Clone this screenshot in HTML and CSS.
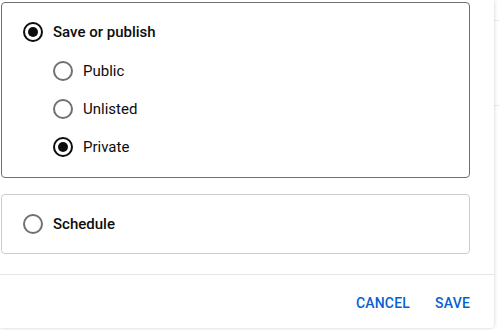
FILE: index.html
```html
<!DOCTYPE html>
<html lang="en">
<head>
    <meta charset="UTF-8">
    <meta name="viewport" content="width=device-width, initial-scale=1.0">
    <title>Visibility</title>
    <link rel="stylesheet" href="styles.css">
</head>
<body>
    <div class="backdrop">
        <div class="dialog">
            <div class="content">
                <div class="option-card selected">
                    <label class="radio-row main">
                        <span class="radio checked"></span>
                        <span>Save or publish</span>
                    </label>
                    <div class="sub-options">
                        <label class="radio-row">
                            <span class="radio"></span>
                            <span>Public</span>
                        </label>
                        <label class="radio-row">
                            <span class="radio"></span>
                            <span>Unlisted</span>
                        </label>
                        <label class="radio-row">
                            <span class="radio checked"></span>
                            <span>Private</span>
                        </label>
                    </div>
                </div>
                <div class="option-card">
                    <label class="radio-row main">
                        <span class="radio"></span>
                        <span>Schedule</span>
                    </label>
                </div>
            </div>
            <div class="footer">
                <button class="text-btn">Cancel</button>
                <button class="text-btn">Save</button>
            </div>
        </div>
    </div>
</body>
</html>
```

FILE: styles.css
```css
body {
    margin: 0;
    background: #ffffff;
    font-family: Roboto, "Liberation Sans", Arial, sans-serif;
    color: #0d0d0d;
    overflow: hidden;
}
.backdrop {
    width: 500px;
    height: 330px;
    background:
        linear-gradient(#eeeeee, #eeeeee) 494px 20px / 6px 1px no-repeat,
        linear-gradient(#eeeeee, #eeeeee) 494px 105px / 6px 1px no-repeat,
        #ffffff;
}
.dialog {
    width: 494px;
    height: 328px;
    background: #ffffff;
    border-radius: 0 0 4px 0;
    box-shadow: 0 0 4px rgba(0, 0, 0, 0.18);
    display: flex;
    flex-direction: column;
}
.content {
    padding: 2px 24px 0 1px;
    display: flex;
    flex-direction: column;
    gap: 16px;
    border-bottom: 1px solid #e5e5e5;
    padding-bottom: 20px;
}
.option-card {
    border: 1px solid #cccccc;
    border-radius: 4px;
    padding: 19px 20px 19px 21px;
}
.option-card.selected {
    border-color: #6f6f6f;
    padding-bottom: 20px;
}
.radio-row {
    display: flex;
    align-items: center;
    gap: 10px;
    height: 20px;
    font-size: 15px;
}
.radio-row.main {
    font-weight: 500;
}
.sub-options {
    display: flex;
    flex-direction: column;
    gap: 18px;
    margin-top: 19px;
    padding-left: 30px;
}
.radio {
    width: 20px;
    height: 20px;
    box-sizing: border-box;
    border: 2px solid #717171;
    border-radius: 50%;
    display: flex;
    align-items: center;
    justify-content: center;
    flex-shrink: 0;
}
.radio.checked {
    border-color: #0d0d0d;
}
.radio.checked::after {
    content: "";
    width: 10px;
    height: 10px;
    border-radius: 50%;
    background: #0d0d0d;
}
.footer {
    flex: 1;
    display: flex;
    justify-content: flex-end;
    align-items: center;
    gap: 25px;
    padding: 3px 24px 0 0;
}
.text-btn {
    border: none;
    background: none;
    padding: 0;
    font-family: inherit;
    font-size: 14px;
    font-weight: 500;
    color: #065fd4;
    text-transform: uppercase;
    letter-spacing: 0.2px;
    cursor: pointer;
}
```
